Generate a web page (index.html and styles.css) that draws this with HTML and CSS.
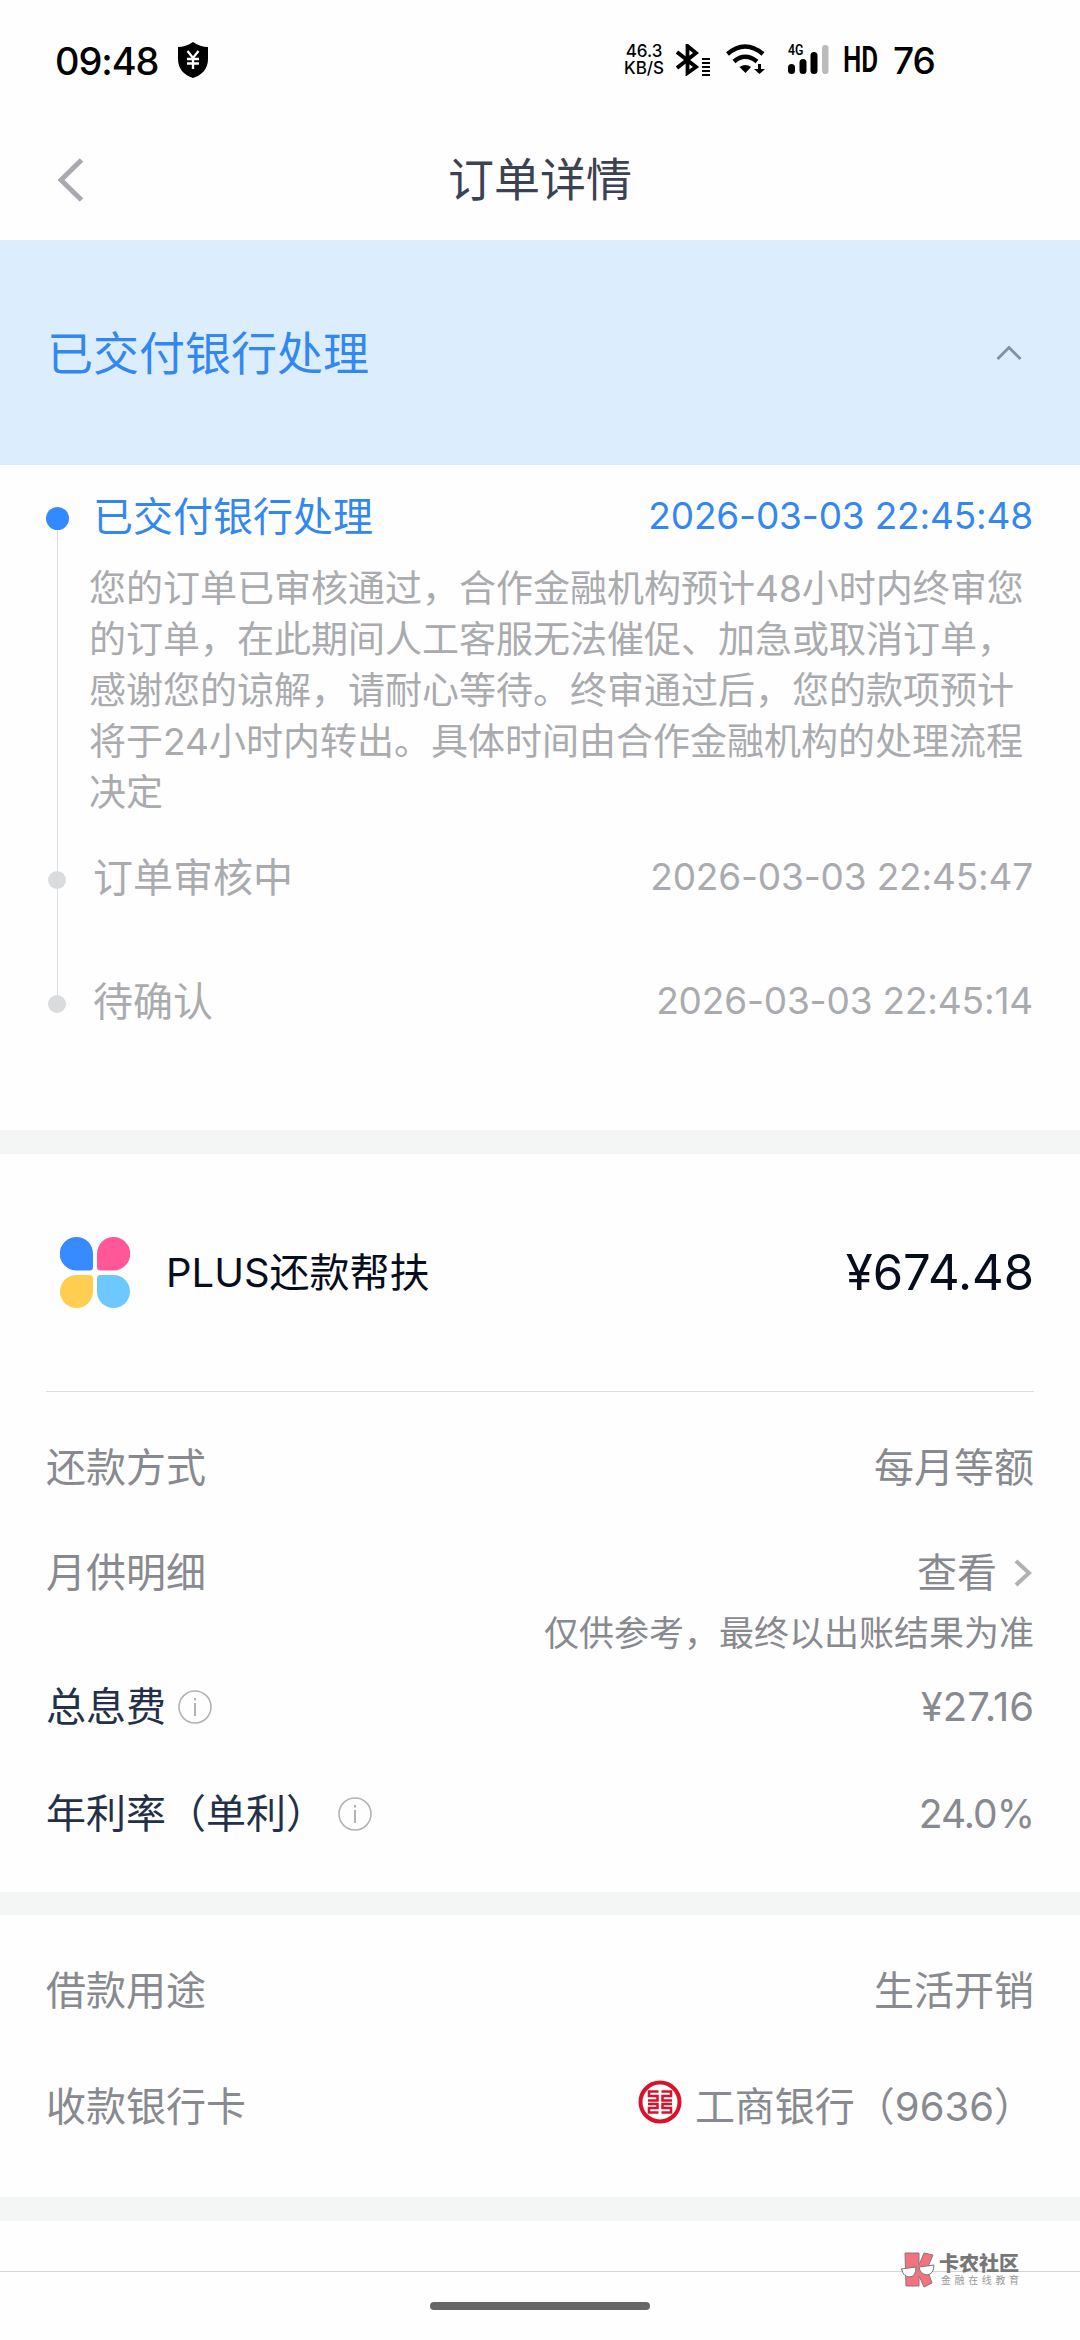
FILE: index.html
```html
<!DOCTYPE html>
<html lang="zh-CN">
<head>
<meta charset="utf-8">
<title>订单详情</title>
<link rel="stylesheet" href="styles.css">
</head>
<body>
<div class="screen">
  <header class="status">
    <span class="clock">09:48</span>
    <svg class="shield" width="30" height="36" viewBox="0 0 30 36"><path d="M15 0C20 3.500 25 5 30 5V17C30 27 24 33 15 36C6 33 0 27 0 17V5C5 5 10 3.500 15 0Z"/><path d="M9.500 9L15 16L20.500 9M15 16V27M9 17H21M9 21.500H21" fill="none" stroke="#fff" stroke-width="2.300"/></svg>
    <span class="fill"></span>
    <span class="speed"><b>46.3</b><b>KB/S</b></span>
    <svg class="bt" width="34" height="32" viewBox="0 0 34 32"><path d="M1 8L20 23L11.500 29V2L20 9L1 24" fill="none" stroke="#000" stroke-width="3.800"/><path d="M26 15H34M26 19H34M26 23H34M26 27H34M26 31H34" stroke="#000" stroke-width="1.900"/></svg>
    <svg class="wifi" width="40" height="32" viewBox="0 0 40 32"><path d="M1.500 10Q19 -5 37 10" fill="none" stroke="#000" stroke-width="4.500"/><path d="M8 17.500Q19 8 31 17.500" fill="none" stroke="#000" stroke-width="4.500"/><path d="M13.500 23Q19.500 19 25 23L19.500 29Z"/><path d="M33.500 20V27" stroke="#000" stroke-width="3"/><path d="M28 25H39L33.500 30Z"/></svg>
    <span class="signal"><small>4G</small><svg width="42" height="32" viewBox="0 0 42 32"><rect x="0" y="20" width="7" height="10" rx="3.500"/><rect x="11.500" y="15" width="7" height="15" rx="3.500"/><rect x="22.500" y="8" width="7" height="22" rx="3.500"/><rect x="34" y="1" width="6.500" height="29" rx="3" fill="#bbb"/></svg></span>
    <span class="hd">HD</span>
    <span class="battery">76</span>
  </header>

  <nav class="nav">
    <svg class="back" width="26" height="44" viewBox="0 0 26 44"><path d="M23.500 2L3 22L23.500 42" fill="none" stroke="#a9aaaf" stroke-width="5"/></svg>
    <h1>订单详情</h1>
  </nav>

  <section class="banner">
    <h2>已交付银行处理</h2>
    <svg width="26" height="16" viewBox="0 0 26 16"><path d="M1.500 14L13 2.500L24.500 14" fill="none" stroke="#84919f" stroke-width="3"/></svg>
  </section>

  <section class="timeline">
    <article class="step current">
      <div class="rail"><i class="dot"></i><i class="line"></i></div>
      <div class="body">
        <div class="head"><span>已交付银行处理</span><time>2026-03-03 22:45:48</time></div>
        <p>您的订单已审核通过，合作金融机构预计48小时内终审您<br>的订单，在此期间人工客服无法催促、加急或取消订单，<br>感谢您的谅解，请耐心等待。终审通过后，您的款项预计<br>将于24小时内转出。具体时间由合作金融机构的处理流程<br>决定</p>
      </div>
    </article>
    <article class="step second">
      <div class="rail"><i class="dot"></i><i class="line"></i></div>
      <div class="body"><div class="head"><span>订单审核中</span><time>2026-03-03 22:45:47</time></div></div>
    </article>
    <article class="step third">
      <div class="rail"><i class="dot"></i></div>
      <div class="body"><div class="head"><span>待确认</span><time>2026-03-03 22:45:14</time></div></div>
    </article>
  </section>

  <section class="loan">
    <div class="product">
      <svg width="70" height="72" viewBox="0 0 70 72"><path d="M16.500 0A16.500 16.500 0 0 1 33 16.500V30Q33 33.500 29.500 33.500H16.500A16.500 16.500 0 0 1 16.500 0Z" fill="#388bff"/><path d="M53.500 0A16.500 16.500 0 0 1 53.500 33.500H40.500Q37 33.500 37 30V16.500A16.500 16.500 0 0 1 53.500 0Z" fill="#ff5797"/><path d="M16.500 38H29.500Q33 38 33 41.500V54.500A16.500 16.500 0 1 1 16.500 38Z" fill="#ffcd50"/><path d="M40.500 38H53.500A16.500 16.500 0 1 1 37 54.500V41.500Q37 38 40.500 38Z" fill="#6dc8ff"/></svg>
      <span class="name">PLUS还款帮扶</span>
      <span class="amount">¥674.48</span>
    </div>
    <div class="row method"><span>还款方式</span><span>每月等额</span></div>
    <div class="row monthly"><span>月供明细</span><span class="view">查看<svg width="18" height="28" viewBox="0 0 18 28"><path d="M2 2L15 14L2 26" fill="none" stroke="#b0b1b3" stroke-width="4"/></svg></span></div>
    <div class="note">仅供参考，最终以出账结果为准</div>
    <div class="row fee"><span class="dark">总息费<svg class="info" width="34" height="34" viewBox="0 0 34 34"><circle cx="17" cy="17" r="16" fill="none" stroke="#b2b3b5" stroke-width="1.600"/><path d="M17 13V26M17 8V10.500" stroke="#b2b3b5" stroke-width="2"/></svg></span><span>¥27.16</span></div>
    <div class="row rate"><span class="dark">年利率（单利）<svg class="info" width="34" height="34" viewBox="0 0 34 34"><circle cx="17" cy="17" r="16" fill="none" stroke="#b2b3b5" stroke-width="1.600"/><path d="M17 13V26M17 8V10.500" stroke="#b2b3b5" stroke-width="2"/></svg></span><span class="percent">24.0%</span></div>
  </section>

  <section class="account">
    <div class="row purpose"><span>借款用途</span><span>生活开销</span></div>
    <div class="row card"><span>收款银行卡</span><span class="bank"><svg width="44" height="44" viewBox="0 0 44 44"><circle cx="22" cy="22" r="19.500" fill="none" stroke="#d9122c" stroke-width="4"/><path d="M20.500 11.500H11V16H19.500V20.500H10M10 24H19.500V28H11V32.500H20.500M23.500 11.500H33V16H24.500V20.500H34M34 24H24.500V28H33V32.500H23.500" fill="none" stroke="#d9122c" stroke-width="2.500"/></svg>工商银行（9636）</span></div>
  </section>

  <footer class="footer">
    <div class="mark">
      <svg width="36" height="36" viewBox="0 0 36 36"><path d="M5 1H19V13L24 1L33 3L27 17L32 31L24 35L19 24V34H6Z" fill="#f2727f" stroke="#8c7779"/><path d="M1 17L16 15Q16 25 9 25Q3 24 2 18ZM19 15L34 13Q34 22 27 23Q20 22 19 15Z" fill="#fff" stroke="#777"/></svg>
      <div class="words"><b>卡农社区</b><span>金融在线教育</span></div>
    </div>
    <div class="home"></div>
  </footer>
</div>
</body>
</html>
```
FILE: styles.css
```css
* { box-sizing: border-box; }
body { margin: 0; background: #fff; font-family: Inter, "Noto Sans CJK SC", sans-serif; }
h1, h2, p { margin: 0; font-weight: 400; }
svg { display: block; flex: none; }
.screen { width: 1080px; height: 2340px; display: flex; flex-direction: column; overflow: hidden; background: #fefefe; }

.status { height: 120px; display: flex; align-items: center; padding: 0 143px 0 55px; color: #000; flex: none; }
.clock { width: 123px; font-size: 38px; font-weight: 450; line-height: 44px; letter-spacing: -1.1px; white-space: nowrap; padding-top: 2px; }
.fill { flex: 1; }
.speed { display: flex; flex-direction: column; align-items: center; width: 44px; font-size: 17px; line-height: 17px; }
.speed b { font-weight: 500; }
.bt { margin-left: 10px; }
.wifi { margin-left: 16px; }
.signal { position: relative; margin-left: 22px; }
.signal small { position: absolute; left: 0; top: -1px; font: 600 14px/14px Roboto, sans-serif; transform: scaleX(.88); transform-origin: left; }
.hd { margin-left: 13px; width: 37px; font: 600 36px/38px Roboto, sans-serif; transform: scaleX(.72); transform-origin: left; white-space: nowrap; }
.battery { margin-left: 13px; width: 44px; font-size: 37px; line-height: 44px; font-weight: 450; letter-spacing: -1px; padding-top: 1px; }

.nav { height: 120px; flex: none; display: grid; grid-template-columns: 84px 1fr 84px; align-items: center; }
.back { justify-self: end; }
.nav h1 { text-align: center; font-size: 46px; line-height: 60px; color: #3c4252; padding-bottom: 2px; }

.banner { height: 225px; flex: none; display: flex; align-items: center; justify-content: space-between; padding: 1px 58px 0 47px; background: #dceefe; color: #3388ef; }
.banner h2 { font-size: 46px; line-height: 60px; }

.timeline { height: 665px; flex: none; padding: 28px 47px 0 46px; color: #aaabae; }
.step { display: flex; }
.current { height: 361px; }
.second { height: 124px; }
.rail { width: 23px; flex: none; display: flex; flex-direction: column; align-items: center; padding-top: 17px; }
.current .rail { padding-top: 14px; }
.second .rail, .third .rail { padding-right: 1px; }
.dot { width: 18px; height: 18px; border-radius: 50%; background: #dadbdc; flex: none; }
.current .dot { width: 23px; height: 23px; background: #318aff; }
.line { flex: 1; width: 1px; background: #dcdde0; margin-bottom: -17px; }
.body { flex: 1; padding-left: 24px; }
.head { display: flex; justify-content: space-between; font-size: 40px; line-height: 48px; }
.head time { font-size: 37px; letter-spacing: -.17px; margin-top: -1px; }
.current .head { color: #3388ef; }
.body p { margin: 22px 0 0 -4px; font-size: 37px; line-height: 51px; white-space: nowrap; }

.loan { height: 762px; flex: none; border-top: 24px solid #f4f6f6; padding: 0 46px; }
.product { height: 238px; display: flex; align-items: center; padding-left: 14px; border-bottom: 1px solid #dadcdd; color: #070d1c; }
.name { margin-left: 36px; font-size: 40px; padding-bottom: 5px; }
.amount { margin-left: auto; font-size: 49px; }
.row { display: flex; justify-content: space-between; align-items: center; color: #888a8f; font-size: 40px; line-height: 52px; }
.row > span { display: flex; align-items: center; }
.method { margin-top: 50px; }
.monthly { margin-top: 53px; }
.view svg { margin: 0 2px 0 17px; }
.note { text-align: right; font-size: 35px; line-height: 48px; margin-top: 10px; color: #888a8f; }
.fee { margin-top: 24px; }
.rate { margin-top: 55px; }
.row .dark { color: #243048; }
.info { margin-left: 12px; }
.row .percent { font-size: 39px; letter-spacing: -1px; }

.account { height: 305px; flex: none; border-top: 23px solid #f4f6f6; padding: 0 46px; }
.purpose { margin-top: 50px; }
.card { margin-top: 64px; }
.bank svg { margin: -10px 13px 0 0; }

.footer { flex: 1; border-top: 24px solid #f4f6f6; position: relative; }
.footer::before { content: ""; display: block; height: 50px; border-bottom: 1px solid #d3d5d6; }
.mark { position: absolute; left: 900px; top: 31px; display: flex; align-items: center; gap: 3px; }
.words { display: flex; flex-direction: column; color: #777; white-space: nowrap; }
.words b { font-size: 20px; line-height: 20px; font-weight: 900; }
.words span { font-size: 10px; line-height: 13px; letter-spacing: 3.600px; color: #999; padding-left: 2px; }
.home { width: 220px; height: 8px; margin: 30px auto 0; border-radius: 4px; background: #666; }
```
